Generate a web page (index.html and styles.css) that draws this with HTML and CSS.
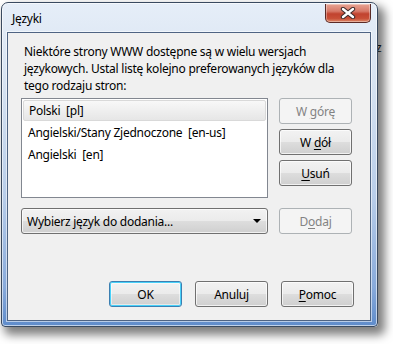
FILE: index.html
```html
<!DOCTYPE html>
<html lang="pl">
<head>
<meta charset="utf-8">
<title>Języki</title>
<link rel="stylesheet" href="styles.css">
</head>
<body>
<div class="stage">
  <span class="behind">z</span>
  <div class="window">
    <div class="titlebar">
      <span class="title">Języki</span>
      <div class="close">
        <svg width="16" height="12" viewBox="0 0 16 12">
          <path d="M3 2 L13 10 M13 2 L3 10" stroke="#3b2a2a" stroke-width="4.4" stroke-linecap="round"/>
          <path d="M3 2 L13 10 M13 2 L3 10" stroke="#ffffff" stroke-width="2.4" stroke-linecap="round"/>
        </svg>
      </div>
    </div>
    <div class="client">
      <p class="intro">Niektóre strony WWW dostępne są w wielu wersjach<br>językowych. Ustal listę kolejno preferowanych języków dla<br>tego rodzaju stron:</p>
      <div class="list-row">
        <div class="listbox">
          <div class="item selected">Polski&nbsp;&nbsp;[pl]</div>
          <div class="item">Angielski/Stany Zjednoczone&nbsp;&nbsp;[en-us]</div>
          <div class="item">Angielski&nbsp;&nbsp;[en]</div>
        </div>
        <div class="side">
          <div class="btn disabled"><span>W <u>g</u>órę</span></div>
          <div class="btn"><span>W <u>d</u>ół</span></div>
          <div class="btn"><span><u>U</u>suń</span></div>
        </div>
      </div>
      <div class="add-row">
        <div class="select">
          <span>Wybierz język do dodania...</span>
          <span class="arrow"></span>
        </div>
        <div class="btn disabled"><span>D<u>o</u>daj</span></div>
      </div>
      <div class="footer">
        <div class="btn default"><span>OK</span></div>
        <div class="btn"><span>Anuluj</span></div>
        <div class="btn"><span><u>P</u>omoc</span></div>
      </div>
    </div>
  </div>
</div>
</body>
</html>
```
FILE: styles.css
```css
html, body {
  margin: 0;
  padding: 0;
  background: #ffffff;
}
body {
  width: 393px;
  height: 344px;
  overflow: hidden;
  font-family: "Noto Sans", "Open Sans", sans-serif;
  font-size: 12px;
  letter-spacing: -0.25px;
  color: #000;
}
.stage {
  position: relative;
  width: 393px;
  height: 344px;
  padding-top: 2px;
  padding-left: 1px;
  box-sizing: border-box;
}
.behind {
  position: absolute;
  left: 376px;
  top: 39px;
  font-size: 12px;
  color: #222;
  z-index: 0;
}
.window {
  position: relative;
  z-index: 1;
  box-sizing: border-box;
  width: 377px;
  height: 325px;
  border: 1px solid #3a4a60;
  border-radius: 7px 7px 4px 4px;
  padding: 0 6px 5px 5px;
  display: flex;
  flex-direction: column;
  background: linear-gradient(to bottom, #e6eef8 0%, #d6e2f1 25%, #b8cde9 60%, #88aadb 88%, #5f8ccb 100%);
  box-shadow: 5px 6px 10px 2px rgba(0, 0, 0, 0.5), inset 0 0 0 1px rgba(255, 255, 255, 0.6);
}
.titlebar {
  height: 29px;
  display: flex;
  align-items: flex-start;
  flex: none;
}
.title {
  margin-left: 5px;
  margin-top: 7px;
  font-size: 12px;
  color: #000;
}
.close {
  margin-left: auto;
  margin-top: 1px;
  width: 46px;
  height: 19px;
  box-sizing: border-box;
  border: 1px solid #5a2a26;
  border-top: none;
  border-radius: 0 0 5px 5px;
  background: linear-gradient(to bottom, #e8a493 0%, #d77968 40%, #c1432f 55%, #c84f37 80%, #dd8a6a 100%);
  display: flex;
  align-items: center;
  justify-content: center;
  box-shadow: inset 0 0 0 1px rgba(255, 255, 255, 0.35);
}
.client {
  flex: 1;
  box-sizing: border-box;
  border: 1px solid #4f6483;
  background: #f0f0f0;
  padding: 10px 16px 13px 13px;
  display: flex;
  flex-direction: column;
  box-shadow: 0 0 0 1px rgba(255, 255, 255, 0.55);
}
.intro {
  margin: 0 0 4px 3px;
  line-height: 17px;
  white-space: nowrap;
}
.list-row {
  display: flex;
  gap: 11px;
}
.listbox {
  box-sizing: border-box;
  width: 247px;
  height: 100px;
  border: 1px solid #828790;
  background: #ffffff;
  padding: 1px;
}
.item {
  height: 22px;
  line-height: 21px;
  padding-left: 5px;
  box-sizing: border-box;
  white-space: nowrap;
}
.item.selected {
  height: 21px;
  margin-bottom: 1px;
  border: 1px solid #d9d9d9;
  border-radius: 2px;
  line-height: 19px;
  background: linear-gradient(to bottom, #f8f8f8, #e6e6e6);
}
.side {
  display: flex;
  flex-direction: column;
  gap: 5px;
}
.btn {
  box-sizing: border-box;
  width: 73px;
  height: 26px;
  border: 1px solid #707070;
  border-radius: 3px;
  display: flex;
  align-items: center;
  justify-content: center;
  background: linear-gradient(to bottom, #f2f2f2 0%, #ebebeb 48%, #dddddd 52%, #cfcfcf 100%);
  box-shadow: inset 0 0 0 1px rgba(255, 255, 255, 0.7);
  color: #000;
  white-space: nowrap;
}
.btn u {
  text-underline-offset: 2px;
}
.btn.disabled {
  border-color: #adb2b5;
  background: #f4f4f4;
  color: #838383;
  box-shadow: none;
}
.btn.default {
  border-color: #3c7fb1;
  box-shadow: inset 0 0 0 1px #48d1f9, inset 0 0 0 2px rgba(255, 255, 255, 0.5);
}
.add-row {
  display: flex;
  gap: 11px;
  margin-top: 10px;
}
.select {
  box-sizing: border-box;
  width: 247px;
  height: 26px;
  border: 1px solid #707070;
  border-radius: 3px;
  display: flex;
  align-items: center;
  padding: 0 6px 0 5px;
  background: linear-gradient(to bottom, #f2f2f2 0%, #ebebeb 48%, #dddddd 52%, #cfcfcf 100%);
  box-shadow: inset 0 0 0 1px rgba(255, 255, 255, 0.7);
}
.arrow {
  margin-left: auto;
  width: 0;
  height: 0;
  border-left: 4px solid transparent;
  border-right: 4px solid transparent;
  border-top: 4px solid #000;
}
.footer {
  margin-top: auto;
  display: flex;
  justify-content: flex-end;
  gap: 13px;
}
```
